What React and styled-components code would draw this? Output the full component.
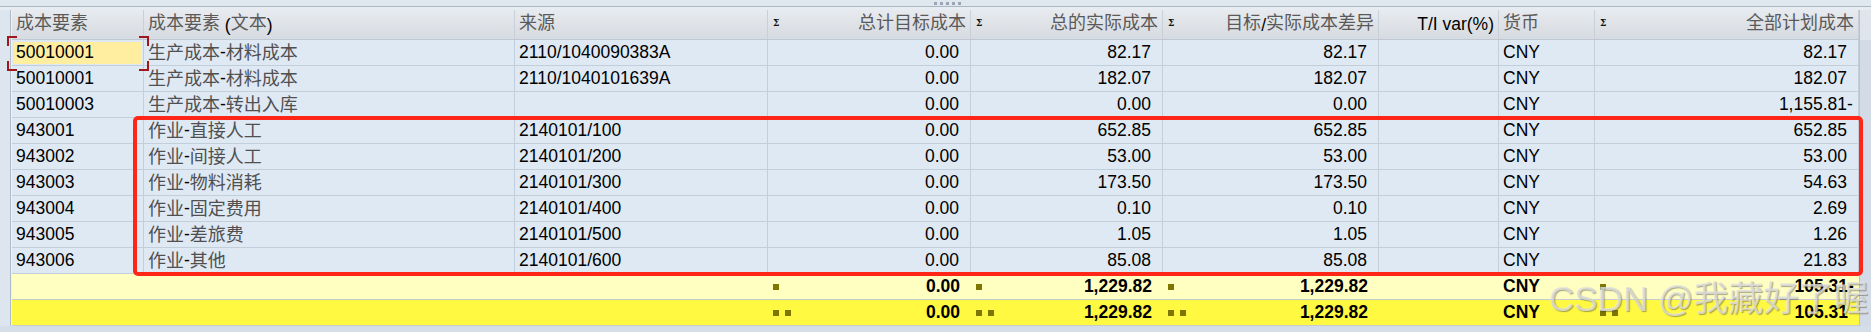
import React from 'react';
import styled, { createGlobalStyle } from 'styled-components';

const COLS = '132px 371px 253px 203px 192px 216px 120px 96px 264px';
const LINE = '#c3cedb';

const Global = createGlobalStyle`
  html, body { margin: 0; padding: 0; background: #d6dfe9; }
  body { font-family: "Liberation Sans", Arial, sans-serif; }
`;

const Page = styled.div`
  position: relative;
  width: 1871px;
  height: 332px;
  overflow: hidden;
  background: #d6dfe9;
  display: flex;
  flex-direction: column;
`;

const TopBar = styled.div`
  box-sizing: border-box;
  height: 7px;
  background: #dfe7ef;
  border-bottom: 1px solid #a9b6c4;
  display: flex;
  justify-content: center;
  padding: 2px 0 0 23px;
`;

const Grip = styled.div`
  display: flex;
  gap: 3px;
`;

const GripDot = styled.span`
  width: 3px;
  height: 3px;
  background: #9aa6b3;
`;

const Band = styled.div`
  height: 3px;
  background: #e6ecf2;
`;

const Main = styled.div`
  display: flex;
  height: 316px;
`;

const LeftGutter = styled.div`
  width: 10px;
  background: #dde5ee;
  border-right: 1px solid #aebbc9;
`;

const RightGutter = styled.div`
  flex: 1;
  display: flex;
  flex-direction: column;
  border-left: 1px solid #b7c3cf;
`;

const GutterTop = styled.div`
  height: 30px;
  background: #dfe5ec;
`;

const GutterRest = styled.div`
  flex: 1;
  background: #d3dce6;
`;

const Grid = styled.div`
  width: 1847px;
  border-left: 1px solid #edf2f7;
  display: flex;
  flex-direction: column;
`;

const HeaderRow = styled.div`
  box-sizing: border-box;
  display: grid;
  grid-template-columns: ${COLS};
  height: 30px;
  background: linear-gradient(#e7eaee, #d6dbe1);
  border-bottom: 1px solid #bfc8d2;
`;

const HeaderCell = styled.div`
  display: flex;
  align-items: center;
  justify-content: ${p => (p.$num ? 'space-between' : p.$right ? 'flex-end' : 'flex-start')};
  padding: 0 4px 0 ${p => (p.$num ? '5px' : '4px')};
  border-right: 1px solid #c7cfd8;
  font-size: 17.5px;
  line-height: 1;
  color: #000;
  white-space: nowrap;
`;

const Sum = styled.span`
  font-family: "DejaVu Serif", serif;
  font-weight: bold;
  font-size: 9px;
  color: #111;
  margin-top: -2px;
`;

const Han = styled.span`
  position: relative;
  top: -2px;
  font-family: "Noto Sans CJK SC", sans-serif;
  font-size: 18px;
  color: ${p => p.$tone || '#505050'};
`;

const DataRow = styled.div`
  display: grid;
  grid-template-columns: ${COLS};
  height: 26px;
`;

const Cell = styled.div`
  position: relative;
  box-sizing: border-box;
  display: flex;
  align-items: center;
  justify-content: ${p => (p.$num ? 'flex-end' : 'flex-start')};
  padding: ${p => (p.$num ? '0 5px 0 4px' : '0 4px')};
  border-right: 1px solid ${LINE};
  border-bottom: 1px solid ${LINE};
  background: ${p =>
    p.$selected
      ? 'linear-gradient(#ffeea0, #ffeea0) no-repeat 2px 2px / calc(100% - 3px) calc(100% - 3px), #dfe9f4'
      : '#dfe9f4'};
  font-size: 17.5px;
  line-height: 1;
  color: #000;
  white-space: nowrap;
`;

const Sign = styled.span`
  display: inline-block;
  width: 6px;
`;

const Focus = styled.svg`
  position: absolute;
  left: -5px;
  top: -4px;
  width: 142px;
  height: 35px;
  overflow: visible;
  pointer-events: none;
  z-index: 5;
`;

const TotalRow = styled.div`
  box-sizing: border-box;
  display: grid;
  grid-template-columns: ${COLS};
  height: 26px;
  background: ${p => (p.$strong ? '#fff942' : '#ffffc2')};
  border-bottom: 1px solid #c6cbd0;
`;

const TotalCell = styled.div`
  display: flex;
  align-items: center;
  justify-content: space-between;
  padding: 0 5px 0 ${p => (p.$text ? '4px' : '5px')};
  font-size: 17.5px;
  font-weight: bold;
  line-height: 1;
  color: #000;
  white-space: nowrap;
`;

const Marks = styled.span`
  display: flex;
  gap: 6px;
`;

const Mark = styled.span`
  width: 6px;
  height: 6px;
  background: #7d7600;
`;

const BottomBand = styled.div`
  height: 6px;
  background: #d5dee8;
`;

const Annotation = styled.div`
  position: absolute;
  left: 133px;
  top: 116px;
  width: 1730px;
  height: 160px;
  box-sizing: border-box;
  border: 4px solid #ff2618;
  border-radius: 5px;
  z-index: 6;
  pointer-events: none;
`;

const Watermark = styled.div`
  position: absolute;
  left: 1549px;
  top: 281px;
  font-family: "Liberation Sans", "Noto Sans CJK SC", sans-serif;
  font-size: 35px;
  line-height: 35px;
  white-space: nowrap;
  color: rgba(226, 226, 226, 0.78);
  text-shadow: 1px 1px 1px rgba(60, 60, 60, 0.45);
  z-index: 7;
  pointer-events: none;
`;

const CJK = /([\u2e80-\u9fff\uff00-\uffef]+)/;

function Txt({ text, tone }) {
  return String(text)
    .split(CJK)
    .map((s, i) => (i % 2 ? <Han key={i} $tone={tone}>{s}</Han> : <React.Fragment key={i}>{s}</React.Fragment>));
}

function Num({ value }) {
  const neg = value.endsWith('-');
  return (
    <>
      {neg ? value.slice(0, -1) : value}
      <Sign>{neg ? '-' : ''}</Sign>
    </>
  );
}

const headers = [
  { t: '成本要素' },
  { t: '成本要素 (文本)' },
  { t: '来源' },
  { t: '总计目标成本', num: true },
  { t: '总的实际成本', num: true },
  { t: '目标/实际成本差异', num: true },
  { t: 'T/I var(%)', right: true },
  { t: '货币' },
  { t: '全部计划成本', num: true },
];

const rows = [
  ['50010001', '生产成本-材料成本', '2110/1040090383A', '0.00', '82.17', '82.17', '', 'CNY', '82.17'],
  ['50010001', '生产成本-材料成本', '2110/1040101639A', '0.00', '182.07', '182.07', '', 'CNY', '182.07'],
  ['50010003', '生产成本-转出入库', '', '0.00', '0.00', '0.00', '', 'CNY', '1,155.81-'],
  ['943001', '作业-直接人工', '2140101/100', '0.00', '652.85', '652.85', '', 'CNY', '652.85'],
  ['943002', '作业-间接人工', '2140101/200', '0.00', '53.00', '53.00', '', 'CNY', '53.00'],
  ['943003', '作业-物料消耗', '2140101/300', '0.00', '173.50', '173.50', '', 'CNY', '54.63'],
  ['943004', '作业-固定费用', '2140101/400', '0.00', '0.10', '0.10', '', 'CNY', '2.69'],
  ['943005', '作业-差旅费', '2140101/500', '0.00', '1.05', '1.05', '', 'CNY', '1.26'],
  ['943006', '作业-其他', '2140101/600', '0.00', '85.08', '85.08', '', 'CNY', '21.83'],
];

const NUM_COLS = new Set([3, 4, 5, 6, 8]);
const SUM_COLS = [3, 4, 5, 8];

const totals = [
  { strong: false, marks: 1, values: { 3: '0.00', 4: '1,229.82', 5: '1,229.82', 7: 'CNY', 8: '105.31-' } },
  { strong: true, marks: 2, values: { 3: '0.00', 4: '1,229.82', 5: '1,229.82', 7: 'CNY', 8: '105.31' } },
];

function FocusMark() {
  return (
    <Focus viewBox="0 0 142 35">
      <g stroke="#a0161b" strokeWidth="2" fill="none">
        <path d="M1 10 V1 H10" />
        <path d="M1 25 V34 H10" />
        <path d="M132 1 H141 V10" />
        <path d="M132 34 H141 V25" />
      </g>
    </Focus>
  );
}

export default function App() {
  return (
    <>
      <Global />
      <Page>
        <TopBar>
          <Grip>
            {[0, 1, 2, 3, 4].map(i => (
              <GripDot key={i} />
            ))}
          </Grip>
        </TopBar>
        <Band />
        <Main>
          <LeftGutter />
          <Grid>
            <HeaderRow>
              {headers.map((h, i) => (
                <HeaderCell key={i} $num={h.num} $right={h.right}>
                  {h.num && <Sum>Σ</Sum>}
                  <span>
                    <Txt text={h.t} tone="#5a5a5a" />
                  </span>
                </HeaderCell>
              ))}
            </HeaderRow>
            {rows.map((r, ri) => (
              <DataRow key={ri}>
                {r.map((v, ci) => (
                  <Cell key={ci} $num={NUM_COLS.has(ci)} $selected={ri === 0 && ci === 0}>
                    {ri === 0 && ci === 0 && <FocusMark />}
                    {NUM_COLS.has(ci) && v ? <Num value={v} /> : <Txt text={v} />}
                  </Cell>
                ))}
              </DataRow>
            ))}
            {totals.map((t, ti) => (
              <TotalRow key={ti} $strong={t.strong}>
                {headers.map((_, ci) => {
                  const isSum = SUM_COLS.includes(ci);
                  const v = t.values[ci];
                  return (
                    <TotalCell key={ci} $text={ci === 7}>
                      {isSum && (
                        <Marks>
                          {Array.from({ length: t.marks }).map((__, k) => (
                            <Mark key={k} />
                          ))}
                        </Marks>
                      )}
                      {v && (isSum ? <span><Num value={v} /></span> : <span>{v}</span>)}
                    </TotalCell>
                  );
                })}
              </TotalRow>
            ))}
          </Grid>
          <RightGutter>
            <GutterTop />
            <GutterRest />
          </RightGutter>
        </Main>
        <BottomBand />
        <Annotation />
        <Watermark>CSDN @我藏好了喔</Watermark>
      </Page>
    </>
  );
}
